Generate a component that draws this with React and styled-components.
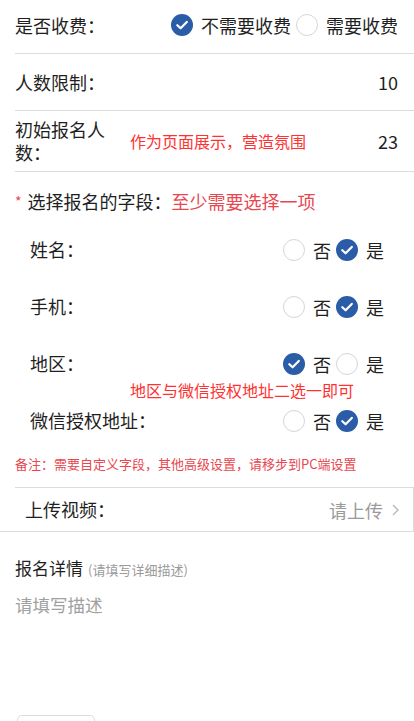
import React from 'react';
import styled, { createGlobalStyle } from 'styled-components';

const GlobalStyle = createGlobalStyle`
  html, body { margin: 0; padding: 0; background: #fff; overflow: hidden; }
  body {
    font-family: "Noto Sans CJK SC", "Noto Sans", sans-serif;
    color: #1f1f1f;
  }
  * { box-sizing: border-box; }
`;

const Page = styled.div`
  width: 100%;
  height: 721px;
  overflow: hidden;
  background: #fff;
`;

const InfoRow = styled.div`
  display: flex;
  align-items: center;
  margin-left: 15px;
  padding-right: 16px;
  padding-bottom: ${(p) => p.$pb || 0}px;
  height: ${(p) => p.$h}px;
  border-bottom: 1px solid #dcdcdc;
  font-size: 18px;
`;

const Label = styled.div`
  flex-shrink: 0;
  width: ${(p) => (p.$w ? `${p.$w}px` : 'auto')};
  line-height: 23px;
`;

const Annotation = styled.span`
  color: #ff3131;
  font-size: 16px;
  line-height: 22px;
  margin-left: ${(p) => p.$ml || 0}px;
`;

const Value = styled.span`
  margin-left: auto;
  font-size: 18px;
`;

const RadioGroup = styled.div`
  display: flex;
  align-items: center;
  gap: 5px;
  margin-left: auto;
`;

const RadioOption = styled.label`
  display: flex;
  align-items: center;
  gap: 8px;
  font-size: 18px;
  line-height: 24px;
`;

const Mark = styled.span`
  width: 22px;
  height: 22px;
  border-radius: 50%;
  display: inline-flex;
  align-items: center;
  justify-content: center;
  background: ${(p) => (p.$on ? '#2a5ca8' : '#fff')};
  border: ${(p) => (p.$on ? 'none' : '1px solid #d6d6d6')};
  flex-shrink: 0;
`;

const SectionHeader = styled.div`
  display: flex;
  align-items: center;
  padding: 17px 0 8px 15px;
  font-size: 18px;
  line-height: 24px;
`;

const Asterisk = styled.span`
  color: #e8474f;
  font-size: 14px;
  margin-right: 6px;
`;

const Hint = styled.span`
  color: #e8474f;
`;

const FieldRow = styled.div`
  position: relative;
  display: flex;
  align-items: center;
  height: 57px;
  padding: 0 30px;
  font-size: 18px;
`;

const FieldNote = styled.span`
  position: absolute;
  left: 130px;
  top: 44px;
  color: #ff3131;
  font-size: 16px;
  line-height: 22px;
`;

const Remark = styled.p`
  margin: 0;
  padding: 5px 15px 13px;
  font-size: 13px;
  line-height: 20px;
  color: #e8474f;
`;

const UploadWrap = styled.div`
  border-bottom: 1px solid #dcdcdc;
`;

const UploadRow = styled.div`
  display: flex;
  align-items: center;
  height: 44px;
  margin-left: 15px;
  padding: 0 14px 0 10px;
  border-top: 1px solid #dcdcdc;
  border-right: 1px solid #dcdcdc;
  font-size: 18px;
`;

const UploadHint = styled.span`
  margin-left: auto;
  color: #9a9a9a;
`;

const Chevron = styled.svg`
  margin-left: 9px;
  width: 7px;
  height: 12px;
`;

const Detail = styled.div`
  padding: 24px 15px 0;
`;

const DetailTitle = styled.div`
  display: flex;
  align-items: baseline;
  font-size: 17px;
  line-height: 24px;
`;

const DetailSub = styled.span`
  margin-left: 5px;
  font-size: 13px;
  color: #9a9a9a;
`;

const DescInput = styled.textarea`
  display: block;
  width: 100%;
  height: 110px;
  margin-top: 11px;
  padding: 0;
  border: none;
  outline: none;
  resize: none;
  font-family: inherit;
  font-size: 17.5px;
  line-height: 24px;
  color: #333;
  &::placeholder { color: #a0a0a0; }
`;

const ImageBox = styled.div`
  width: 78px;
  height: 78px;
  margin: 12px 0 0 2px;
  border: 1px solid #dcdcdc;
  border-radius: 5px;
`;

function Radio({ on, children }) {
  return (
    <RadioOption>
      <Mark $on={on}>
        {on && (
          <svg width="14" height="14" viewBox="0 0 14 14">
            <polyline
              points="2.3,7.2 5.6,10.3 11.8,3.9"
              fill="none"
              stroke="#fff"
              strokeWidth="2.2"
              strokeLinecap="round"
              strokeLinejoin="round"
            />
          </svg>
        )}
      </Mark>
      {children}
    </RadioOption>
  );
}

const fields = [
  { name: '姓名：', yes: true },
  { name: '手机：', yes: true },
  { name: '地区：', yes: false, note: '地区与微信授权地址二选一即可' },
  { name: '微信授权地址：', yes: true },
];

export default function App() {
  return (
    <Page>
      <GlobalStyle />
      <InfoRow $h={54} $pb={3}>
        <Label>是否收费：</Label>
        <RadioGroup>
          <Radio on>不需要收费</Radio>
          <Radio on={false}>需要收费</Radio>
        </RadioGroup>
      </InfoRow>
      <InfoRow $h={57}>
        <Label>人数限制：</Label>
        <Value>10</Value>
      </InfoRow>
      <InfoRow $h={61}>
        <Label $w={95}>初始报名人数：</Label>
        <Annotation $ml={20}>作为页面展示，营造氛围</Annotation>
        <Value>23</Value>
      </InfoRow>

      <SectionHeader>
        <Asterisk>*</Asterisk>
        选择报名的字段：
        <Hint>至少需要选择一项</Hint>
      </SectionHeader>

      {fields.map((f) => (
        <FieldRow key={f.name}>
          <Label>{f.name}</Label>
          <RadioGroup>
            <Radio on={!f.yes}>否</Radio>
            <Radio on={f.yes}>是</Radio>
          </RadioGroup>
          {f.note && <FieldNote>{f.note}</FieldNote>}
        </FieldRow>
      ))}

      <Remark>备注：需要自定义字段，其他高级设置，请移步到PC端设置</Remark>

      <UploadWrap>
        <UploadRow>
          <Label>上传视频：</Label>
          <UploadHint>请上传</UploadHint>
          <Chevron viewBox="0 0 7 12">
            <polyline points="1,1 6,6 1,11" fill="none" stroke="#bdbdbd" strokeWidth="1.5" />
          </Chevron>
        </UploadRow>
      </UploadWrap>

      <Detail>
        <DetailTitle>
          报名详情<DetailSub>(请填写详细描述)</DetailSub>
        </DetailTitle>
        <DescInput placeholder="请填写描述" />
        <ImageBox />
      </Detail>
    </Page>
  );
}
